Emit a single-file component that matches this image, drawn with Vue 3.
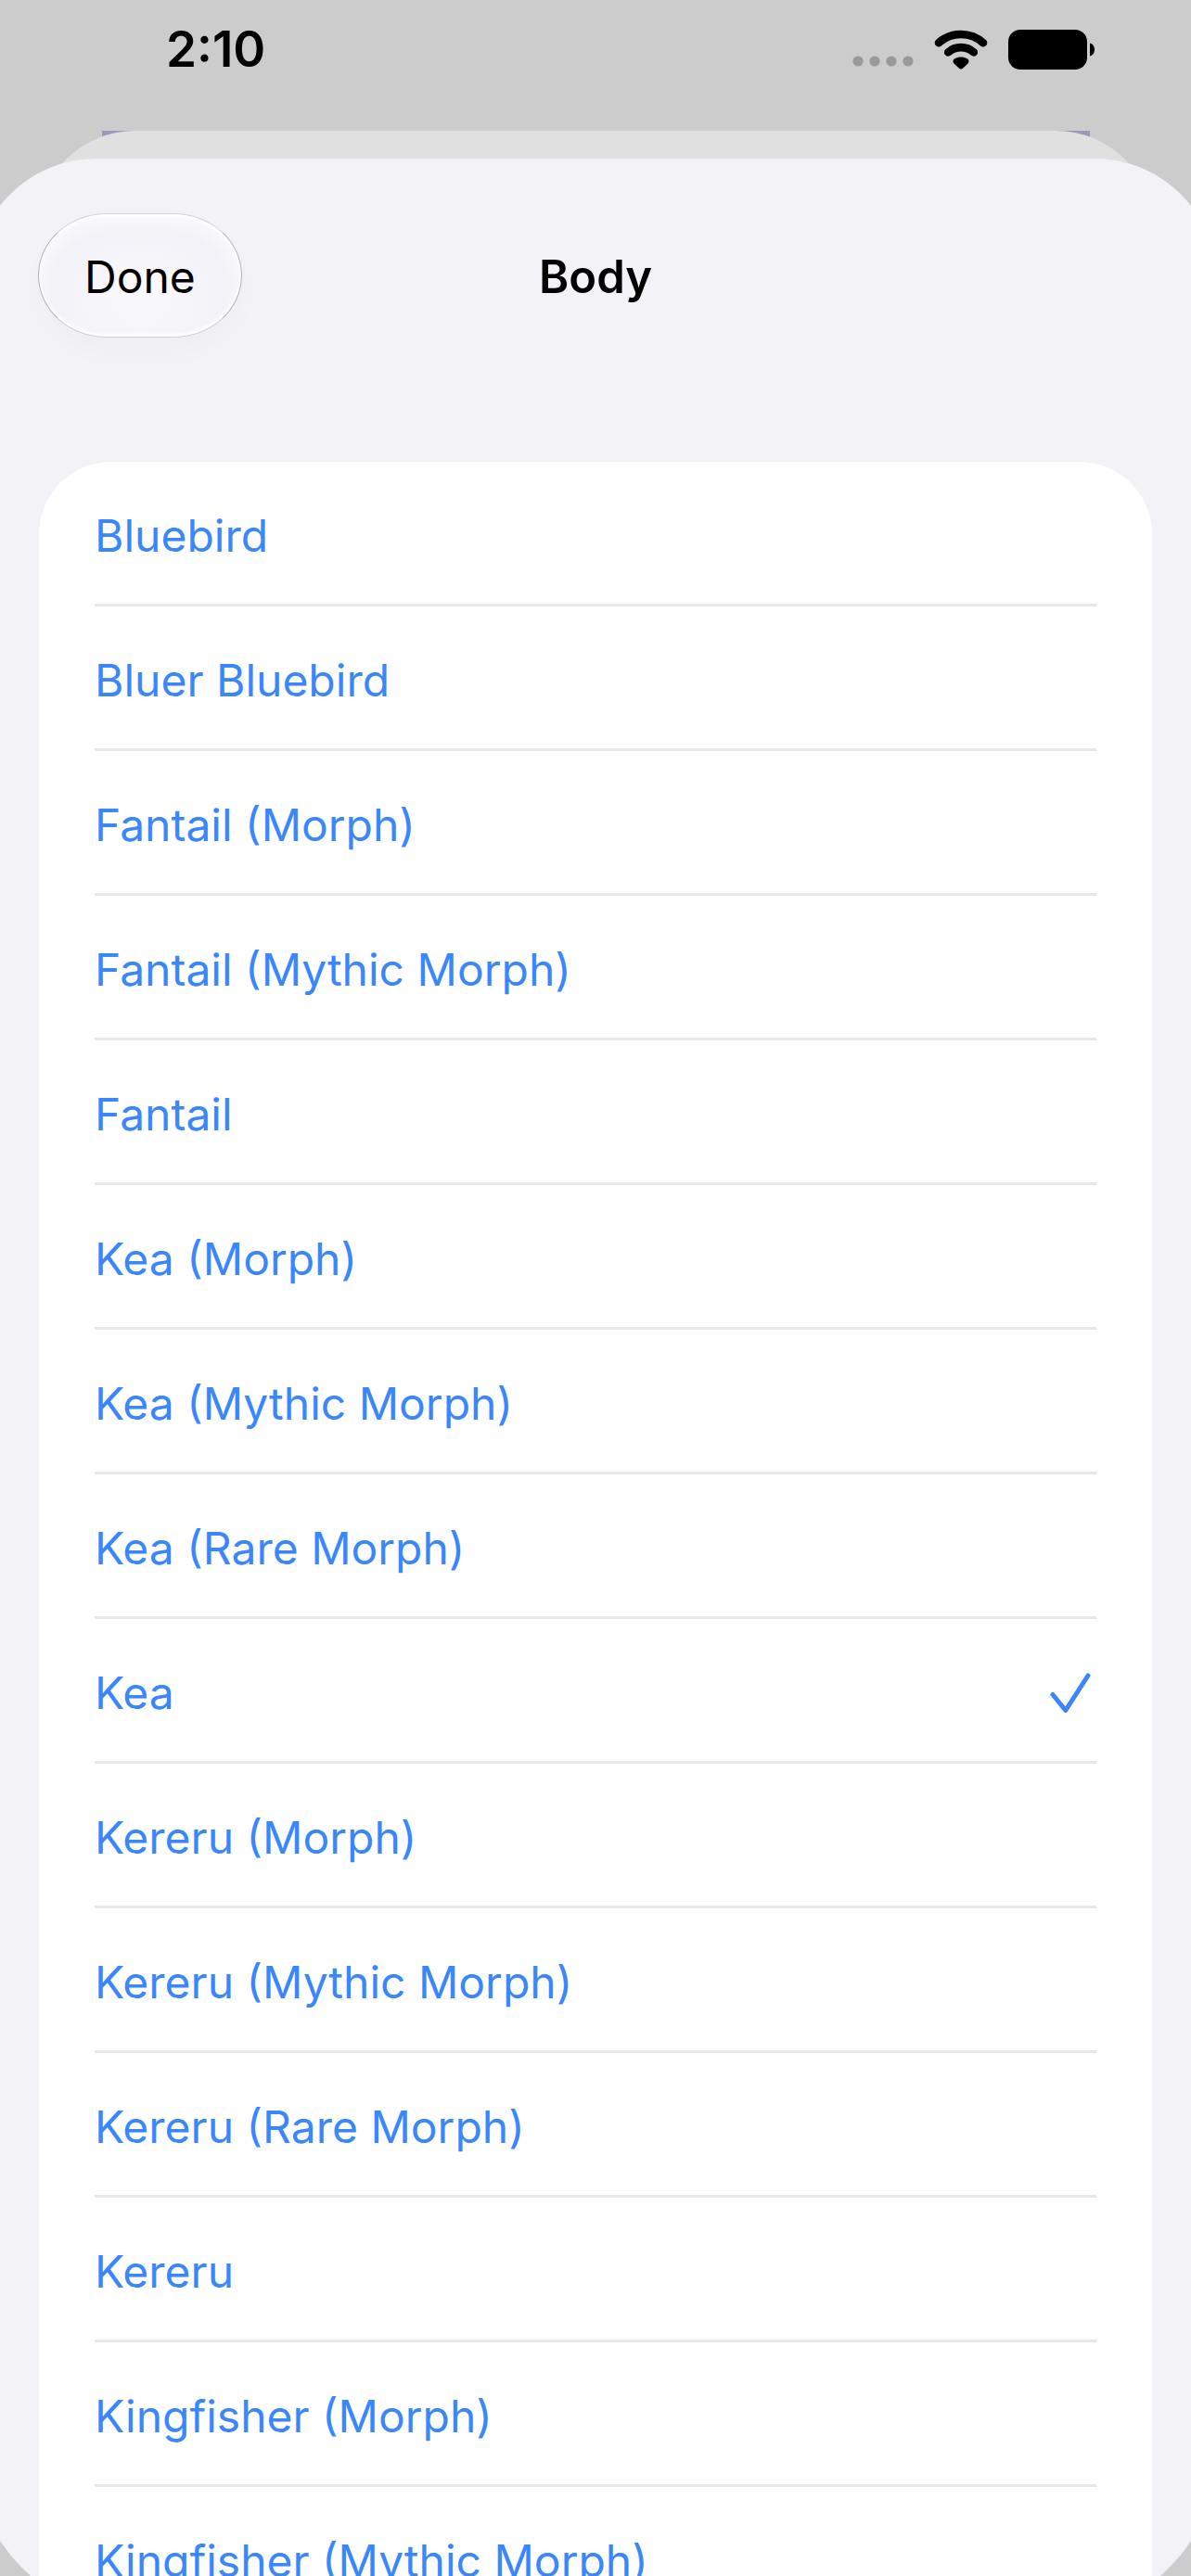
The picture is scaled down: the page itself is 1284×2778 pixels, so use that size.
<script setup>
import { ref } from 'vue'

const selected = ref('Kea')
const bodies = [
  'Bluebird',
  'Bluer Bluebird',
  'Fantail (Morph)',
  'Fantail (Mythic Morph)',
  'Fantail',
  'Kea (Morph)',
  'Kea (Mythic Morph)',
  'Kea (Rare Morph)',
  'Kea',
  'Kereru (Morph)',
  'Kereru (Mythic Morph)',
  'Kereru (Rare Morph)',
  'Kereru',
  'Kingfisher (Morph)',
  'Kingfisher (Mythic Morph)',
]
</script>

<template>
  <div class="screen">
    <header class="status">
      <time class="clock">2:10</time>
      <div class="indicators">
        <svg class="signal" width="66" height="12" viewBox="0 0 66 12" aria-hidden="true">
          <circle cx="6" cy="6" r="5.6" />
          <circle cx="24" cy="6" r="5.6" />
          <circle cx="42" cy="6" r="5.6" />
          <circle cx="60" cy="6" r="5.6" />
        </svg>
        <svg class="wifi" width="58" height="43" viewBox="0 0 58 43" aria-hidden="true">
          <g fill="none" stroke="#000" stroke-width="8.6" stroke-linecap="round">
            <path d="M5 14.2C18.5 1.9 39.5 1.9 53 14.2" />
            <path d="M15.2 24.4C23 17.3 35 17.3 42.8 24.4" />
          </g>
          <path d="M22.2 37.2C19.8 35 19.9 32.6 22.4 31.2C26.3 29 31.7 29 35.6 31.2C38.1 32.6 38.2 35 35.8 37.2L31.2 41.4C29.6 42.8 28.4 42.8 26.8 41.4Z" />
        </svg>
        <svg class="battery" width="94" height="43" viewBox="0 0 94 43" aria-hidden="true">
          <rect width="85" height="43" rx="13" />
          <path d="M88 14.5C91.5 15.5 93 18.5 93 21.5C93 24.5 91.5 27.5 88 28.5Z" />
        </svg>
      </div>
    </header>

    <div class="stack">
      <div class="banner"></div>
      <div class="back-card"></div>
      <main class="sheet">
        <nav class="toolbar">
          <button class="done" type="button">Done</button>
          <h1 class="title">Body</h1>
        </nav>
        <ul class="list">
          <li v-for="name in bodies" :key="name" class="item">
            <button
              class="option"
              type="button"
              :aria-pressed="selected === name"
              @click="selected = name"
            >
              <span>{{ name }}</span>
              <svg v-if="selected === name" class="check" width="44" height="44" viewBox="0 0 44 44" aria-hidden="true">
                <path d="M3 23.5L16.8 40.5L41 3" />
              </svg>
            </button>
          </li>
        </ul>
      </main>
    </div>
  </div>
</template>

<style>
body {
  margin: 0;
  background: #cccccc;
}
</style>

<style scoped>
.screen {
  display: flex;
  flex-direction: column;
  height: 100vh;
  overflow: hidden;
  background: #cccccc;
  color: #000;
  font-family: Inter, "Liberation Sans", sans-serif;
}

.status {
  display: flex;
  flex: none;
  justify-content: space-between;
  box-sizing: border-box;
  height: 141px;
  padding: 21px 103px 0 179px;
}

.clock {
  font-size: 53px;
  font-weight: 600;
  line-height: 64px;
}

.indicators {
  display: flex;
  align-items: center;
  height: 64px;
}

.signal {
  align-self: flex-end;
  margin: 0 22px 13px 0;
  fill: #999999;
}

.wifi {
  margin-right: 22px;
}

.stack {
  display: grid;
  flex: 1;
  grid-template-columns: minmax(0, 1fr);
  min-height: 0;
}

.banner,
.back-card,
.sheet {
  grid-area: 1 / 1;
}

.banner {
  height: 12px;
  margin: 0 109px 0 110px;
  background: #a095bf;
}

.back-card {
  height: 160px;
  margin: 0 40px;
  border-radius: 106px 106px 0 0;
  background: #e0e0e0;
}

/* The sheet bleeds past the screen edges so only part of each corner shows. */
.sheet {
  box-sizing: border-box;
  height: calc(100vh - 129px);
  margin: 30px -28px 0;
  padding: 59px 70px 0;
  overflow: hidden;
  border-radius: 132px 132px 175px 175px;
  background: #f2f2f7;
}

.toolbar {
  display: grid;
  grid-template-columns: 1fr auto 1fr;
  align-items: center;
  margin-bottom: 134px;
}

.done {
  justify-self: start;
  box-sizing: border-box;
  height: 134px;
  margin-left: -1px;
  padding: 3px 49px 0;
  border: 1px solid #b4b3b9;
  border-top-color: #d4d3d9;
  border-bottom-color: #d0cfd5;
  border-radius: 74px / 67px;
  background: radial-gradient(ellipse at 50% 70%, #f8f7fc 20%, #f3f2f8 60%, #f9f8fc 100%);
  box-shadow:
    inset 0 3px 3px #ffffff,
    inset 0 -3px 3px #ffffff,
    inset 0 8px 16px #fbfafe,
    0 16px 32px rgba(0, 0, 0, 0.02);
  color: #000;
  font: inherit;
  font-size: 48px;
  line-height: 60px;
}

.title {
  margin: 0;
  padding-top: 3px;
  font-size: 49px;
  font-weight: 600;
  line-height: 60px;
}

.list {
  margin: 0;
  padding: 0 60px;
  border-radius: 78px 78px 0 0;
  background: #ffffff;
  list-style: none;
}

.item {
  border-bottom: 3px solid #e7e7e7;
}

.option {
  display: flex;
  align-items: center;
  justify-content: space-between;
  width: 100%;
  height: 153px;
  padding: 6px 6px 0 0;
  border: 0;
  background: none;
  color: #3a87fb;
  font: inherit;
  font-size: 48px;
  line-height: 60px;
  text-align: left;
}

.check {
  fill: none;
  stroke: currentColor;
  stroke-width: 5;
  stroke-linecap: round;
  stroke-linejoin: round;
}
</style>
